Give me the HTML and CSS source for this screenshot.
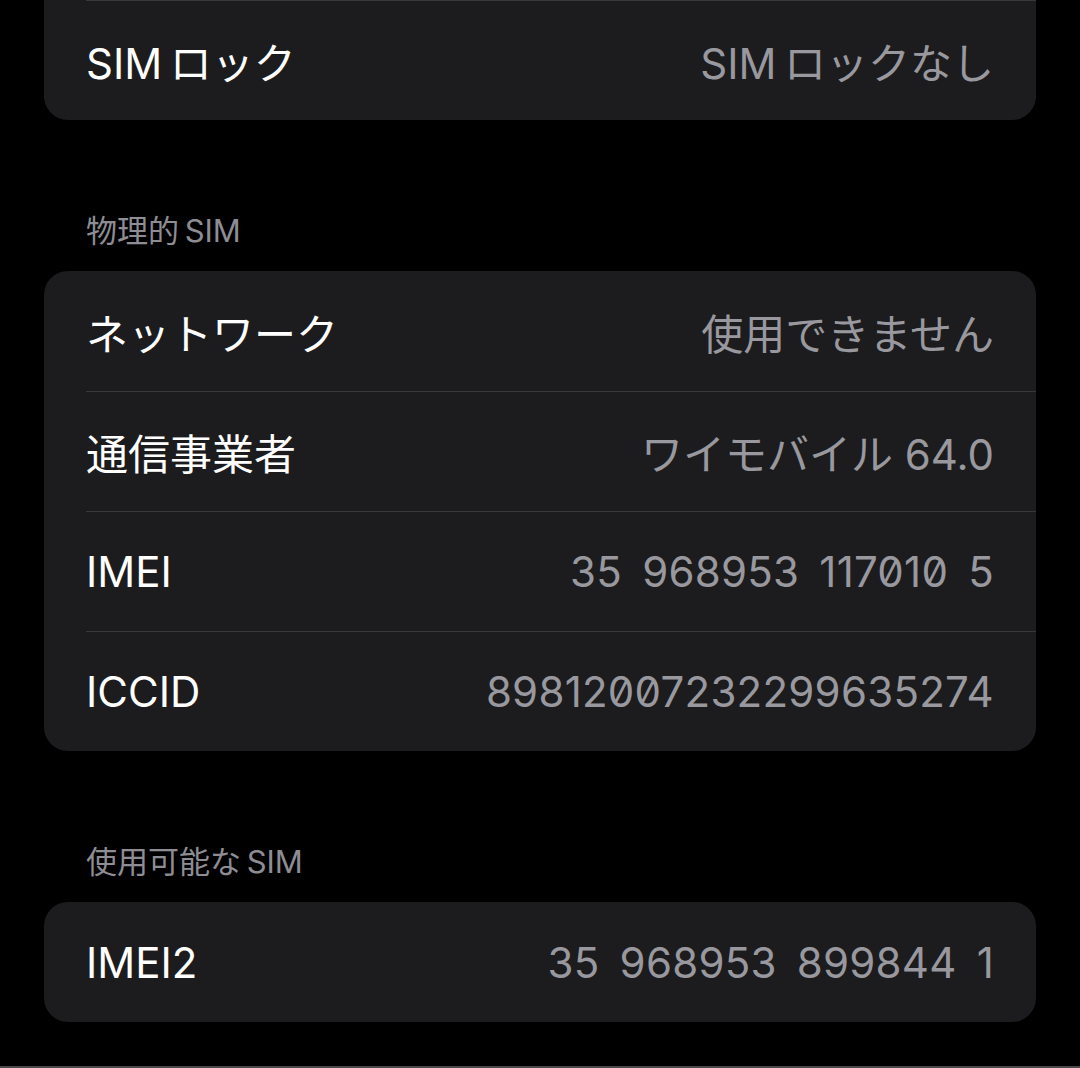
FILE: index.html
```html
<!DOCTYPE html>
<html lang="ja">
<head>
    <meta charset="UTF-8">
    <meta name="viewport" content="width=device-width, initial-scale=1.0">
    <title>SIM</title>
    <link rel="stylesheet" href="styles.css">
</head>
<body>
    <div class="screen">
        <div class="card card-cut">
            <div class="row row-sep">
                <span class="label">SIM&#8201;ロック</span>
                <span class="value">SIM&#8201;ロックなし</span>
            </div>
        </div>

        <div class="section-title">物理的&#8201;SIM</div>
        <div class="card">
            <div class="row">
                <span class="label">ネットワーク</span>
                <span class="value">使用できません</span>
            </div>
            <div class="row row-sep">
                <span class="label">通信事業者</span>
                <span class="value">ワイモバイル 64.0</span>
            </div>
            <div class="row row-sep">
                <span class="label">IMEI</span>
                <span class="value num">35 968953 117010 5</span>
            </div>
            <div class="row row-sep">
                <span class="label">ICCID</span>
                <span class="value num">89812007232299635274</span>
            </div>
        </div>

        <div class="section-title">使用可能な&#8201;SIM</div>
        <div class="card">
            <div class="row">
                <span class="label">IMEI2</span>
                <span class="value num">35 968953 899844 1</span>
            </div>
        </div>
    </div>
    <div class="bottom-edge"></div>
</body>
</html>
```

FILE: styles.css
```css
html, body {
    margin: 0;
    padding: 0;
}
body {
    font-family: Inter, "Noto Sans CJK JP", sans-serif;
    background-color: #000;
    color: #fff;
    height: 1068px;
    overflow: hidden;
    position: relative;
}
.screen {
    padding: 0 44px;
}
.card {
    background-color: #1c1c1e;
    border-radius: 24px;
    overflow: hidden;
}
.card-cut {
    border-radius: 0 0 24px 24px;
}
.row {
    height: 120px;
    box-sizing: border-box;
    margin-left: 42px;
    padding-right: 42px;
    display: flex;
    justify-content: space-between;
    align-items: center;
    font-size: 42px;
}
.row-sep {
    border-top: 1px solid #38383a;
}
.label {
    color: #fff;
}
.value {
    color: #98989e;
}
.num {
    font-feature-settings: "zero";
    letter-spacing: 0.25px;
    word-spacing: 8px;
}
.section-title {
    padding: 91px 0 20px 42px;
    line-height: 40px;
    font-size: 31px;
    color: #8d8d93;
}
.bottom-edge {
    position: absolute;
    left: 0;
    right: 0;
    bottom: 0;
    height: 2px;
    background-color: #4a4a4c;
}
```
